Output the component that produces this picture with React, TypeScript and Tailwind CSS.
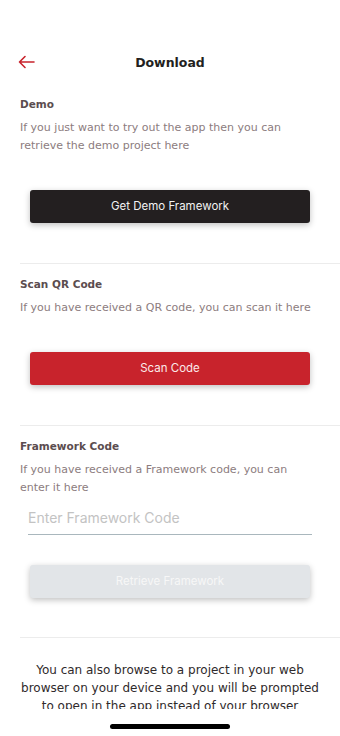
const body = "font-['DejaVu_Sans','Liberation_Sans',sans-serif]";
const ui = "font-['Inter','Roboto',sans-serif]";

function Divider() {
  return <div className="ml-5 h-px bg-[#ececec]" />;
}

function Section({ title, children }: { title: string; children: React.ReactNode }) {
  return (
    <section className="pl-5 pr-[23px]">
      <h2 className="text-[10.5px] font-bold leading-4 text-[#5b4d4f]">{title}</h2>
      <p className="mt-[7px] text-[11px] leading-[18px] text-[#8c7c7e]">{children}</p>
    </section>
  );
}

function ActionButton({ label, className }: { label: string; className: string }) {
  return (
    <button
      className={`mx-auto flex h-[33px] w-[280px] items-center justify-center rounded-[3px] text-[11.5px] shadow-[0_2px_6px_rgba(0,0,0,0.25)] ${ui} ${className}`}
    >
      {label}
    </button>
  );
}

export default function App() {
  return (
    <div className={`flex h-[736px] w-[340px] flex-col overflow-hidden bg-white ${body}`}>
      <div className="h-[709px] overflow-hidden">
        <header className="relative mt-[50px] flex h-[26px] items-center justify-center">
          <svg
            className="absolute left-[18px] top-[5px]"
            width="17"
            height="14"
            viewBox="0 0 17 14"
            fill="none"
            stroke="#c8232c"
            strokeWidth="1.6"
            strokeLinecap="round"
            strokeLinejoin="round"
          >
            <path d="M16 7H1.5M7 1.5L1.5 7L7 12.5" />
          </svg>
          <h1 className="text-[12.5px] font-bold text-[#231f20]">Download</h1>
        </header>

        <div className="mt-[20px]">
          <Section title="Demo">
            If you just want to try out the app then you can retrieve the demo project here
          </Section>
          <div className="mt-[35px]">
            <ActionButton label="Get Demo Framework" className="bg-[#231f20] text-[#f2f2f2]" />
          </div>
        </div>

        <div className="mt-[40px]">
          <Divider />
        </div>

        <div className="mt-[12px]">
          <Section title="Scan QR Code">If you have received a QR code, you can scan it here</Section>
          <div className="mt-[35px]">
            <ActionButton label="Scan Code" className="bg-[#c8232c] text-[#fbeaea]" />
          </div>
        </div>

        <div className="mt-[40px]">
          <Divider />
        </div>

        <div className="mt-[12px]">
          <Section title="Framework Code">
            If you have received a Framework code, you can enter it here
          </Section>
          <div className="mx-[28px] mt-[9px] border-b border-[#a9b7bd] pb-[4px]">
            <input
              className={`w-full bg-transparent text-[14px] leading-5 text-[#333] outline-none placeholder:text-[#c3c3c3] ${ui}`}
              placeholder="Enter Framework Code"
            />
          </div>
          <div className="mt-[30px]">
            <ActionButton label="Retrieve Framework" className="bg-[#e2e5e8] text-[#f7f7f7]" />
          </div>
        </div>

        <div className="mt-[39px]">
          <Divider />
        </div>

        <p className="mx-auto mt-[23px] w-[300px] text-center text-[12px] leading-[18px] text-[#2f2a2b]">
          You can also browse to a project in your web browser on your device and you will be prompted to
          open in the app instead of your browser
        </p>
      </div>
      <div className="flex flex-1 items-center justify-center">
        <div className="mt-[8px] h-[5px] w-[120px] rounded-full bg-black" />
      </div>
    </div>
  );
}
